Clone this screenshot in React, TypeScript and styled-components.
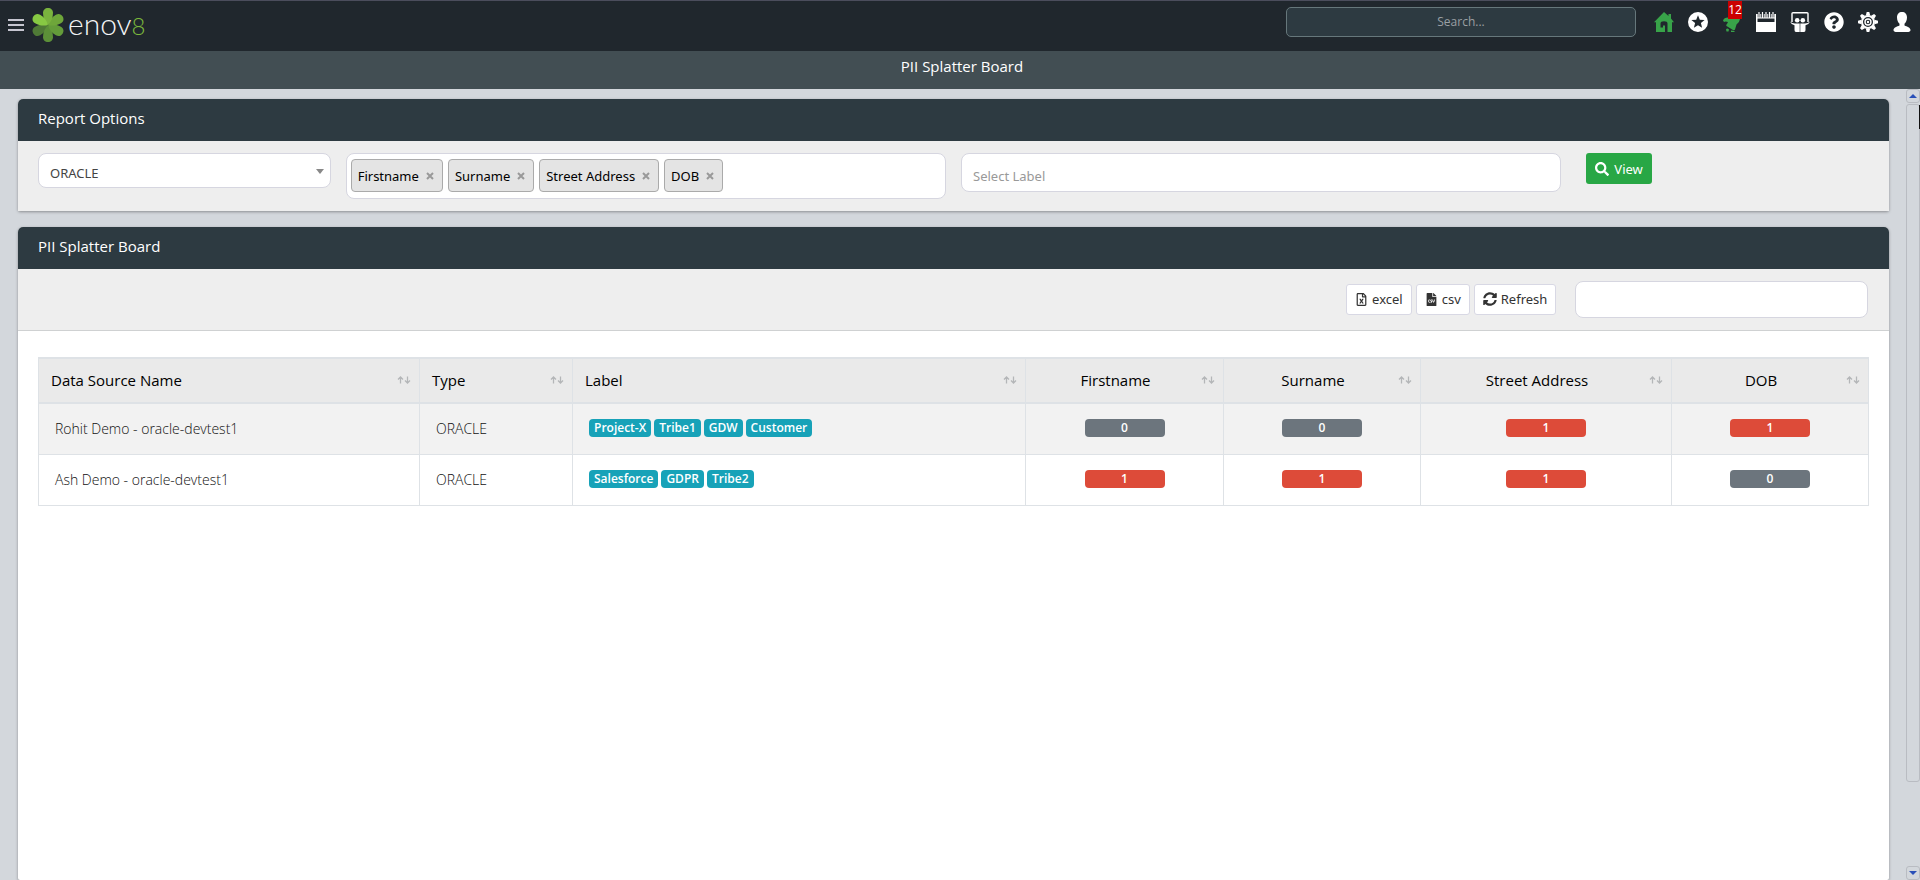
import React from 'react';
import styled, { createGlobalStyle } from 'styled-components';
import {
  FaFileCsv,
  FaQuestionCircle,
  FaRegFileExcel,
  FaSearch,
  FaSyncAlt,
} from 'react-icons/fa';

const heading = '"Open Sans", "Noto Sans", sans-serif';
const control = '"Noto Sans", "Open Sans", sans-serif';

const GlobalStyle = createGlobalStyle`
  *, *::before, *::after { box-sizing: border-box; }
  body { margin: 0; background: #d3d7dc; font-family: ${heading}; font-size: 14px; color: #111; }
  button, input, select { font: inherit; margin: 0; }
  h1, h2 { margin: 0; font-weight: 400; font-size: 15px; color: #fff; }
`;

const Page = styled.div`
  display: flex;
  flex-direction: column;
  height: 100vh;
  overflow: hidden;
`;

const Header = styled.header`
  display: flex;
  align-items: flex-start;
  justify-content: space-between;
  flex: none;
  height: 51px;
  border-top: 1px solid #4b4d5c;
  background: #20272d;
  padding: 6px 8px 0;
`;

const Brand = styled.div`
  display: flex;
  align-items: center;
  gap: 8px;
  height: 36px;
`;

const IconButton = styled.button`
  display: flex;
  position: relative;
  border: 0;
  padding: 0;
  background: none;
  color: inherit;
  cursor: pointer;
`;

const LogoLink = styled.a`
  display: flex;
  align-items: center;
  gap: 4px;
  color: #f4f5f6;
  text-decoration: none;
`;

const Wordmark = styled.span`
  display: flex;
  align-items: baseline;
  height: 36px;
  font-family: Lato, sans-serif;
  font-weight: 300;
  font-size: 30px;
  line-height: 32px;
`;

const WordmarkEight = styled.span`
  font-size: 24px;
  color: #7ab83c;
`;

const HeaderTools = styled.div`
  display: flex;
  align-items: center;
  gap: 18px;
`;

const SearchBox = styled.input`
  width: 350px;
  height: 30px;
  border: 1px solid #66777b;
  border-radius: 5px;
  padding: 0 0 2px 12px;
  background: #2d3a41;
  color: #fff;
  text-align: center;
  font-size: 12px;
  &::placeholder { color: #9a9fa3; opacity: 1; }
`;

const IconBar = styled.nav`
  display: flex;
  gap: 14px;
  color: #fff;
`;

const HeaderIcon = styled(IconButton)<{ $active?: boolean }>`
  color: ${(p) => (p.$active ? '#38a349' : '#fff')};
`;

const Count = styled.span`
  position: absolute;
  top: -11px;
  right: 0;
  width: 14px;
  background: #cb0000;
  color: #fff;
  font-size: 12px;
  line-height: 18px;
  text-align: center;
`;

const TitleBar = styled.div`
  flex: none;
  height: 38px;
  background: #424e53;
  padding-left: 4px;
  text-align: center;
  line-height: 30px;
`;

const Workspace = styled.div`
  display: flex;
  flex: 1;
  min-height: 0;
`;

const Content = styled.main`
  display: flex;
  flex-direction: column;
  flex: 1;
  gap: 16px;
  padding: 10px 17px 0 18px;
`;

const Panel = styled.section<{ $grow?: boolean }>`
  flex: ${(p) => (p.$grow ? '1' : 'none')};
  border-radius: 5px 5px 2px 2px;
  background: #fff;
  box-shadow: 0 1px 3px rgba(0, 0, 0, 0.35);
`;

const PanelHeader = styled.header`
  height: 42px;
  padding: 0 20px;
  border-radius: 5px 5px 0 0;
  background: #2d3a41;
  line-height: 38px;
`;

const Filters = styled.form`
  display: grid;
  grid-template-columns: repeat(12, 1fr);
  column-gap: 15px;
  align-items: start;
  padding: 12px 20px;
  background: #eee;
  font-family: ${control};
  font-size: 13px;
`;

const Field = styled.div<{ $span: number }>`
  display: flex;
  position: relative;
  grid-column: span ${(p) => p.$span};
`;

const Select = styled.select`
  appearance: none;
  width: 100%;
  height: 35px;
  border: 1px solid #d6d6e0;
  border-radius: 8px;
  padding: 4px 24px 0 11px;
  background: #fff;
  color: #444;
`;

const Caret = styled.svg`
  position: absolute;
  top: 16px;
  right: 7px;
  pointer-events: none;
`;

const TagBox = styled.div`
  display: flex;
  gap: 5px;
  width: 100%;
  height: 46px;
  border: 1px solid #d6d6e0;
  border-radius: 8px;
  padding: 5px 4px;
  background: #fff;
`;

const Tag = styled.span`
  display: flex;
  align-items: center;
  gap: 7px;
  height: 33px;
  border: 1px solid #aaa;
  border-radius: 4px;
  padding: 0 8px 0 6px;
  background: #e4e4e4;
  color: #000;
`;

const TextField = styled.input<{ $tall?: boolean }>`
  width: 100%;
  height: ${(p) => (p.$tall ? '39px' : '37px')};
  border: 1px solid #d6d6e0;
  border-radius: 8px;
  padding: ${(p) => (p.$tall ? '6px 11px 0' : '0 11px')};
  background: #fff;
  &::placeholder { color: #999; opacity: 1; }
`;

const ViewButton = styled.button`
  display: flex;
  align-items: center;
  gap: 5px;
  height: 31px;
  margin-left: 10px;
  border: 0;
  border-radius: 3px;
  padding: 0 9px;
  background: #28a745;
  color: #fff;
`;

const Toolbar = styled.div`
  display: flex;
  align-items: center;
  justify-content: flex-end;
  gap: 4px;
  border-bottom: 1px solid #cfd1d2;
  padding: 12px 21px;
  background: #eee;
  font-family: ${control};
  font-size: 13px;
`;

const ToolButton = styled.button`
  display: flex;
  align-items: center;
  gap: 4px;
  height: 31px;
  border: 1px solid #d8d8e4;
  border-radius: 3px;
  padding: 0 8px 1px;
  background: #fff;
  color: #333;
`;

const TableFilter = styled.label`
  width: 16%;
  margin-left: 15px;
`;

const TableArea = styled.div`
  padding: 26px 20px;
`;

const Table = styled.table`
  width: 100%;
  table-layout: fixed;
  border-collapse: collapse;
`;

const Column = styled.col<{ $width: number }>`
  width: ${(p) => p.$width}px;
`;

const HeadCell = styled.th<{ $center?: boolean }>`
  height: 45px;
  border: 1px solid #dee2e6;
  border-top-width: 2px;
  border-bottom-width: 2px;
  padding: 0 8px 2px 12px;
  background: #eaeaea;
  color: #000;
  font-size: 15px;
  font-weight: 400;
  text-align: ${(p) => (p.$center ? 'center' : 'left')};
`;

const HeadContent = styled.div`
  display: flex;
  align-items: center;
  gap: 8px;
`;

const HeadText = styled.span`
  flex: 1;
`;

const Row = styled.tr`
  &:nth-child(odd) { background: #f2f2f2; }
`;

const Cell = styled.td<{ $center?: boolean }>`
  height: 51px;
  border: 1px solid #dee2e6;
  padding: 0 16px 1px;
  font-weight: 300;
  text-align: ${(p) => (p.$center ? 'center' : 'left')};
`;

const Badges = styled.div`
  display: flex;
  gap: 3px;
`;

const Badge = styled.span`
  border-radius: 4px;
  padding: 0 5px;
  background: #17a2b8;
  color: #fff;
  font-size: 12px;
  font-weight: 600;
  line-height: 18px;
`;

const Score = styled(Badge)<{ $hit: boolean }>`
  display: block;
  width: 80px;
  margin: 0 auto;
  background: ${(p) => (p.$hit ? '#dd4b39' : '#6c757d')};
`;

const Scrollbar = styled.div`
  display: flex;
  flex-direction: column;
  flex: none;
  width: 14px;
`;

const ScrollButton = styled.button`
  display: flex;
  align-items: center;
  justify-content: center;
  flex: none;
  height: 14px;
  border: 1px solid #b9bcc2;
  border-radius: 3px;
  padding: 0;
  background: #d3d7dc;
`;

const ScrollTrack = styled.div`
  flex: 1;
  padding-top: 1px;
`;

const ScrollThumb = styled.div`
  height: 89%;
  border: 1px solid #b9bcc2;
  border-radius: 3px;
`;

const FocusMark = styled.div`
  width: 1px;
  height: 24px;
  margin: 0 -1px 0 auto;
  background: #111;
`;

const MenuIcon = () => (
  <svg width="16" height="12" viewBox="0 0 16 12" fill="#c6c6d0">
    <path d="M0 0h16v2H0zM0 5h16v2H0zM0 10h16v2H0z" />
  </svg>
);

const petals: [number, string][] = [
  [240, '#4f7a36'],
  [180, '#5c9038'],
  [120, '#649c3a'],
  [60, '#6ea63a'],
  [0, '#7ab33e'],
  [300, '#87c943'],
];

const Flower = () => (
  <svg width="32" height="34" viewBox="-16 -17 32 34">
    {petals.map(([angle, fill]) => (
      <path
        key={angle}
        d="M0 0C-3-3-5-7-5-12C-5-15-3-17 0-17S5-15 5-12C5-7 3-3 0 0Z"
        fill={fill}
        transform={`rotate(${angle})`}
      />
    ))}
  </svg>
);

const HomeIcon = () => (
  <svg width="20" height="20" viewBox="0 0 20 20" fill="currentColor">
    <path d="M10 0L14.5 4V2H17V6.5L20 10.2H18V20H13.5V11.6Q13.5 9.2 10 9.2T6.5 11.6V15.5H9V13.5H11V20H2V10.2H0Z" />
  </svg>
);

const StarIcon = () => (
  <svg width="20" height="20" viewBox="0 0 20 20" fill="currentColor">
    <path
      fillRule="evenodd"
      d="M10 0a10 10 0 1 0 0 20a10 10 0 1 0 0-20ZM10 3.2L11.8 7.7L16.6 8L12.9 11.1L14.1 15.8L10 13.2L5.9 15.8L7.1 11.1L3.4 8L8.2 7.7Z"
    />
  </svg>
);

const BellIcon = () => (
  <svg width="20" height="20" viewBox="0 0 20 20" fill="currentColor">
    <path d="M1 8.500Q2 5.500 6 5.500L8 7H18Q17.500 10.500 14.500 12.500L13 17.500Q12.500 18.500 11 18L4.500 14Q3.500 13 5 12L6 10Q3.500 9 2 10Z" />
    <path d="M4 17.500Q5 15.500 7 17.500L6.500 19.500H4.500ZM9 18.500L12.500 19V20H9Z" />
  </svg>
);

const CalendarIcon = () => (
  <svg width="20" height="20" viewBox="0 0 20 20">
    <path d="M0 2H20V20H0Z" fill="#fff" />
    <path d="M1.500 6.500H18.500V10H1.500Z" fill="#20272d" />
    {[3, 6.5, 10, 13.5, 17].map((x) => (
      <g key={x}>
        <path d={`M${x} 0V5.5`} stroke="#20272d" strokeWidth="2.600" />
        <path d={`M${x} 0V6`} stroke="#fff" strokeWidth="1.200" />
      </g>
    ))}
  </svg>
);

const SlideshareIcon = () => (
  <svg width="20" height="20" viewBox="0 0 20 20" fill="currentColor">
    <path d="M2 10V1.500Q2 .700 3 .700H17Q18 .700 18 1.500V10" fill="none" stroke="currentColor" strokeWidth="1.400" />
    <circle cx="7.200" cy="8.300" r="2.300" />
    <circle cx="12.800" cy="8.300" r="2.300" />
    <path d="M0 9.500Q2 11.500 5 11.500H9.700V20H6Q4.500 20 4.500 18V13.200Q1 12.500 0 9.500ZM20 9.500Q18 11.500 15 11.500H10.300V20H14Q15.500 20 15.500 18V13.200Q19 12.500 20 9.500Z" />
  </svg>
);

const GearIcon = () => (
  <svg width="20" height="20" viewBox="-10 -10 20 20" fill="currentColor">
    {[0, 45, 90, 135, 180, 225, 270, 315].map((angle) => (
      <path key={angle} d="M-2.200-6.500L-1.300-10H1.300L2.200-6.500Z" transform={`rotate(${angle})`} />
    ))}
    <circle r="6" fill="none" stroke="currentColor" strokeWidth="2" />
    <circle r="3" fill="none" stroke="currentColor" strokeWidth="1.400" />
    <circle r="1.200" />
  </svg>
);

const UserIcon = () => (
  <svg width="20" height="20" viewBox="0 0 20 20" fill="currentColor">
    <path d="M10 0C13 0 15 2 15 5.500C15 8.500 13.800 10.500 12.500 11.800V13.500C15 14.500 18.500 15.500 18.500 18Q18.500 20 15 20H5Q1.500 20 1.500 18C1.500 15.500 5 14.500 7.500 13.500V11.800C6.200 10.500 5 8.500 5 5.500C5 2 7 0 10 0Z" />
  </svg>
);

const SortIcon = () => (
  <svg width="14" height="8" viewBox="0 0 14 8" fill="none" stroke="#b4b6b8" strokeWidth="1.300">
    <path d="M3.500 7.500V1M1 3.500L3.500 1L6 3.500M10.500 .500V7M8 4.500L10.500 7L13 4.500" />
  </svg>
);

const RemoveIcon = () => (
  <svg width="8" height="8" viewBox="0 0 8 8" stroke="#999" strokeWidth="2">
    <path d="M1 1L7 7M7 1L1 7" />
  </svg>
);

const ScrollArrow = ({ down }: { down?: boolean }) => (
  <svg width="8" height="4" viewBox="0 0 8 4" fill="#2a50b8">
    <path d={down ? 'M0 0H8L4 4Z' : 'M0 4H8L4 0Z'} />
  </svg>
);

const columns = [
  { name: 'Data Source Name', width: 381 },
  { name: 'Type', width: 153 },
  { name: 'Label', width: 453 },
  { name: 'Firstname', width: 198, center: true },
  { name: 'Surname', width: 197, center: true },
  { name: 'Street Address', width: 251, center: true },
  { name: 'DOB', width: 197, center: true },
];

const rows = [
  {
    source: 'Rohit Demo - oracle-devtest1',
    type: 'ORACLE',
    labels: ['Project-X', 'Tribe1', 'GDW', 'Customer'],
    scores: [0, 0, 1, 1],
  },
  {
    source: 'Ash Demo - oracle-devtest1',
    type: 'ORACLE',
    labels: ['Salesforce', 'GDPR', 'Tribe2'],
    scores: [1, 1, 1, 0],
  },
];

export default function App() {
  return (
    <Page>
      <GlobalStyle />
      <Header>
        <Brand>
          <IconButton aria-label="Menu"><MenuIcon /></IconButton>
          <LogoLink href="#">
            <Flower />
            <Wordmark>enov<WordmarkEight>8</WordmarkEight></Wordmark>
          </LogoLink>
        </Brand>
        <HeaderTools>
          <SearchBox type="search" placeholder="Search..." aria-label="Search" />
          <IconBar>
            <HeaderIcon $active aria-label="Home"><HomeIcon /></HeaderIcon>
            <HeaderIcon aria-label="Favourites"><StarIcon /></HeaderIcon>
            <HeaderIcon $active aria-label="Notifications">
              <BellIcon />
              <Count>12</Count>
            </HeaderIcon>
            <HeaderIcon aria-label="Calendar"><CalendarIcon /></HeaderIcon>
            <HeaderIcon aria-label="Slides"><SlideshareIcon /></HeaderIcon>
            <HeaderIcon aria-label="Help"><FaQuestionCircle size={20} /></HeaderIcon>
            <HeaderIcon aria-label="Settings"><GearIcon /></HeaderIcon>
            <HeaderIcon aria-label="Account"><UserIcon /></HeaderIcon>
          </IconBar>
        </HeaderTools>
      </Header>
      <TitleBar><h1>PII Splatter Board</h1></TitleBar>
      <Workspace>
        <Content>
          <Panel>
            <PanelHeader><h2>Report Options</h2></PanelHeader>
            <Filters onSubmit={(e) => e.preventDefault()}>
              <Field $span={2}>
                <Select aria-label="Data source type">
                  <option>ORACLE</option>
                </Select>
                <Caret width="8" height="5" viewBox="0 0 8 5" fill="#888">
                  <path d="M0 0H8L4 5Z" />
                </Caret>
              </Field>
              <Field $span={4}>
                <TagBox>
                  {['Firstname', 'Surname', 'Street Address', 'DOB'].map((name) => (
                    <Tag key={name}>
                      {name}
                      <IconButton type="button" aria-label={`Remove ${name}`}><RemoveIcon /></IconButton>
                    </Tag>
                  ))}
                </TagBox>
              </Field>
              <Field $span={4}>
                <TextField $tall placeholder="Select Label" aria-label="Select Label" />
              </Field>
              <Field $span={2}>
                <ViewButton><FaSearch size={14} />View</ViewButton>
              </Field>
            </Filters>
          </Panel>
          <Panel $grow>
            <PanelHeader><h2>PII Splatter Board</h2></PanelHeader>
            <Toolbar>
              <ToolButton><FaRegFileExcel width={11} height={14} />excel</ToolButton>
              <ToolButton><FaFileCsv width={11} height={14} />csv</ToolButton>
              <ToolButton><FaSyncAlt size={14} />Refresh</ToolButton>
              <TableFilter><TextField aria-label="Filter table" /></TableFilter>
            </Toolbar>
            <TableArea>
              <Table>
                <colgroup>
                  {columns.map((c) => <Column key={c.name} $width={c.width} />)}
                </colgroup>
                <thead>
                  <tr>
                    {columns.map((c) => (
                      <HeadCell key={c.name} $center={c.center}>
                        <HeadContent>
                          <HeadText>{c.name}</HeadText>
                          <SortIcon />
                        </HeadContent>
                      </HeadCell>
                    ))}
                  </tr>
                </thead>
                <tbody>
                  {rows.map((row) => (
                    <Row key={row.source}>
                      <Cell>{row.source}</Cell>
                      <Cell>{row.type}</Cell>
                      <Cell>
                        <Badges>
                          {row.labels.map((label) => <Badge key={label}>{label}</Badge>)}
                        </Badges>
                      </Cell>
                      {row.scores.map((score, i) => (
                        <Cell key={i} $center><Score $hit={score > 0}>{score}</Score></Cell>
                      ))}
                    </Row>
                  ))}
                </tbody>
              </Table>
            </TableArea>
          </Panel>
        </Content>
        <Scrollbar>
          <ScrollButton aria-label="Scroll up"><ScrollArrow /></ScrollButton>
          <ScrollTrack><ScrollThumb><FocusMark /></ScrollThumb></ScrollTrack>
          <ScrollButton aria-label="Scroll down"><ScrollArrow down /></ScrollButton>
        </Scrollbar>
      </Workspace>
    </Page>
  );
}
